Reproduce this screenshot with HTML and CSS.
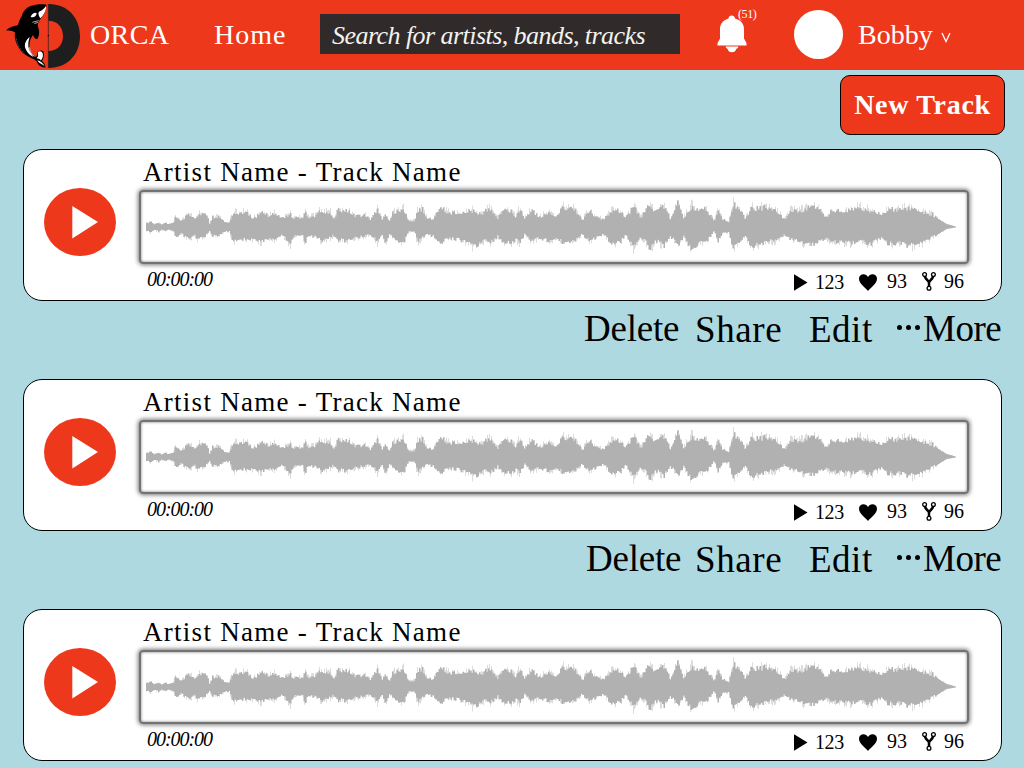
FILE: index.html
```html
<!DOCTYPE html>
<html lang="en">
<head>
<meta charset="utf-8">
<title>ORCA</title>
<link rel="stylesheet" href="styles.css">
</head>
<body>
<svg class="defs" aria-hidden="true">
  <symbol id="wave" viewBox="0 0 820 70" preserveAspectRatio="none">
    <path id="wave-soft" fill="#b1b1b1" opacity=".45"/>
    <path id="wave-core" fill="#b1b1b1"/>
  </symbol>
  <symbol id="play" viewBox="0 0 72 68">
    <ellipse cx="36" cy="34" rx="36" ry="34" fill="#ee381c"/>
    <path d="M28.3 18 54 34 28.3 50.5Z" fill="#fff"/>
  </symbol>
  <symbol id="tri" viewBox="0 0 14 17"><path d="M0 .3 13.5 8.5 0 16.7Z"/></symbol>
  <symbol id="heart" viewBox="0 0 18 17"><path d="M9 17C6 13.500 0 9.500 0 4.800 0 1.800 2 .2 4.500 .2 6.500 .2 8.200 1.300 9 3 9.800 1.300 11.500 .2 13.500 .2 16 .2 18 1.800 18 4.800 18 9.500 12 13.500 9 17Z"/></symbol>
  <symbol id="fork" viewBox="0 0 14 19">
    <g fill="none" stroke="#000">
      <circle cx="2.600" cy="2.600" r="1.900" stroke-width="1.300"/>
      <circle cx="11.400" cy="2.600" r="1.900" stroke-width="1.300"/>
      <circle cx="7" cy="16.300" r="1.900" stroke-width="1.300"/>
      <path d="M3 4.500C3.500 8 7 8 7 11V14.300M11 4.500C10.500 8 7 8 7 11" stroke-width="2.500"/>
    </g>
  </symbol>
</svg>

<header class="topbar">
  <svg class="logo" viewBox="15 6 228 204">
    <path d="M145 12C205 12 240 55 240 108S205 204 145 204V153C173 153 189 134 189 108S173 62 145 62Z" fill="#1e1e1e"/>
    <path d="M145 12V204" stroke="#1e1e1e" stroke-width="2"/>
    <circle cx="145" cy="107" r="2"/>
    <path d="M139 14C128 12 108 12 92 18 78 23 69 34 66 47 60 55 56 66 54 76 43 77 28 82 18 91 29 91 39 93 45 97 42 113 48 129 55 141 64 158 82 170 98 176 104 178 109 182 112 187 113 194 121 202 136 203 137 196 133 189 126 184 131 178 133 165 130 154 123 149 116 152 112 159 112 165 110 168 108 171 96 165 88 154 88 137 88 122 94 112 99 105 101 112 106 117 111 118 119 109 119 91 114 80 112 71 116 63 122 56 132 44 140 29 139 14Z"/>
    <path d="M138 17C129 24 123 32 117 35 112 43 119 49 121 55 132 44 140 29 138 17Z" fill="#fff"/>
    <path d="M139 14C130 14 123 23 117 34 128 31 136 23 139 14Z"/>
    <path d="M92 51C96 40 106 36 110 40 109 49 101 54 92 51Z" fill="#fff"/>
    <path d="M97 67 116 62M103 71 114 67" stroke="#fff" stroke-width="2"/>
    <path d="M89 111C77 121 72 133 76 145 80 157 89 166 101 171 92 159 84 147 85 132 85 124 88 117 89 111Z" fill="#fff"/>
    <path d="M89 142C88 153 94 163 103 169" fill="none" stroke="#fff" stroke-width="2"/>
    <path d="M114 157C119 151 125 153 128 160 130 170 127 179 122 181 120 175 112 177 110 174 117 169 113 164 114 157ZM112 181C121 183 131 190 135 201 128 191 118 193 112 181Z" fill="#fff"/>
    <path d="M49 116C51 132 60 147 73 159" fill="none" stroke="#ddd" stroke-width="1.500" stroke-dasharray="3 3"/>
  </svg>
  <span class="brand">ORCA</span>
  <a class="home">Home</a>
  <div class="search">Search for artists, bands, tracks</div>
  <div class="alerts">
    <svg class="bell" viewBox="0 0 30 38"><path d="M11.500 3.500C11.500-.5 18-.5 18 3.500 23.500 5 27 8.500 27 14V23.500L29.500 28V30.500H.5V28L3 23.500V14C3 8.500 6.500 5 11.500 3.500ZM8.500 31.500H21.500C21 33.500 19 33.500 18.800 35 18 38 12 38 11 35 11 33.500 9 33.500 8.500 31.500Z" fill="#fff"/></svg>
    <span class="count">(51)</span>
  </div>
  <div class="avatar"></div>
  <span class="user">Bobby</span>
  <svg class="caret" viewBox="0 0 10 11"><path d="M1 1 5 9.500 9 1" fill="none" stroke="#fff" stroke-width="1.300"/></svg>
</header>

<main class="feed">
  <div class="toolbar"><button class="new-track">New Track</button></div>

  <article class="track">
    <svg class="play"><use href="#play"/></svg>
    <div class="detail">
      <h2 class="title">Artist Name - Track Name</h2>
      <div class="frame"><svg class="wave"><use href="#wave"/></svg></div>
      <div class="meta">
        <span class="time">00:00:00</span>
        <svg class="tri"><use href="#tri"/></svg><span class="plays">123</span>
        <svg class="heart"><use href="#heart"/></svg><span class="likes">93</span>
        <svg class="fork"><use href="#fork"/></svg><span class="forks">96</span>
      </div>
    </div>
  </article>
  <nav class="actions">
    <a class="delete">Delete</a><a class="share">Share</a><a class="edit">Edit</a><a class="more"><i class="dots"><b></b><b></b><b></b></i>More</a>
  </nav>

  <article class="track">
    <svg class="play"><use href="#play"/></svg>
    <div class="detail">
      <h2 class="title">Artist Name - Track Name</h2>
      <div class="frame"><svg class="wave"><use href="#wave"/></svg></div>
      <div class="meta">
        <span class="time">00:00:00</span>
        <svg class="tri"><use href="#tri"/></svg><span class="plays">123</span>
        <svg class="heart"><use href="#heart"/></svg><span class="likes">93</span>
        <svg class="fork"><use href="#fork"/></svg><span class="forks">96</span>
      </div>
    </div>
  </article>
  <nav class="actions">
    <a class="delete tight">Delete</a><a class="share">Share</a><a class="edit">Edit</a><a class="more"><i class="dots"><b></b><b></b><b></b></i>More</a>
  </nav>

  <article class="track">
    <svg class="play"><use href="#play"/></svg>
    <div class="detail">
      <h2 class="title">Artist Name - Track Name</h2>
      <div class="frame"><svg class="wave"><use href="#wave"/></svg></div>
      <div class="meta">
        <span class="time">00:00:00</span>
        <svg class="tri"><use href="#tri"/></svg><span class="plays">123</span>
        <svg class="heart"><use href="#heart"/></svg><span class="likes">93</span>
        <svg class="fork"><use href="#fork"/></svg><span class="forks">96</span>
      </div>
    </div>
  </article>
</main>
<script src="wave.js"></script>
</body>
</html>
```
FILE: styles.css
```css
* { box-sizing: border-box; }
body {
  margin: 0;
  height: 768px;
  overflow: hidden;
  background: #aed9e1;
  color: #000;
  font-family: "Liberation Serif", "Times New Roman", serif;
}
svg { display: block; flex: none; }
.defs { position: absolute; width: 0; height: 0; }

.topbar {
  display: flex;
  align-items: center;
  height: 70px;
  padding-left: 5px;
  background: #ee381c;
  color: #fff;
  font-size: 28px;
  white-space: nowrap;
}
.logo { width: 76px; height: 68px; margin-top: 2px; }
.brand { width: 123px; padding-left: 9px; letter-spacing: .4px; }
.home { width: 116px; padding-left: 10px; letter-spacing: 1px; }
.search {
  width: 360px;
  height: 40px;
  margin-bottom: 2px;
  padding-left: 12px;
  background: #312a2a;
  color: #f3f3ee;
  font-size: 26px;
  font-style: italic;
  letter-spacing: -.55px;
  line-height: 43px;
}
.alerts { display: flex; align-items: flex-start; width: 114px; height: 54px; padding-left: 37px; }
.bell { width: 30px; height: 38px; margin-top: 7px; }
.count { margin-left: -9px; font-size: 12px; line-height: 13px; letter-spacing: -.4px; }
.avatar { width: 49px; height: 49px; margin-bottom: 1px; border-radius: 50%; background: #fff; }
.user { flex: none; width: 98px; padding-left: 15px; }
.caret { width: 10px; height: 11px; margin: 4px 0 0 0; }

.feed { padding: 5px 22px 0 23px; }
.toolbar { display: flex; justify-content: flex-end; height: 74px; margin-right: -3px; }
.new-track {
  width: 165px;
  height: 60px;
  padding: 0;
  border: 1px solid #000;
  border-radius: 10px;
  background: #ee381c;
  color: #fff;
  font: bold 28px/58px "Liberation Serif", serif;
  letter-spacing: .7px;
}

.track {
  display: flex;
  width: 979px;
  height: 152px;
  padding-left: 20px;
  border: 1px solid #000;
  border-radius: 19px;
  background: #fff;
}
.play { width: 72px; height: 68px; margin-top: 38px; }
.detail { width: 830px; margin-left: 23px; }
.title {
  height: 35px;
  margin: 5px 0 0;
  padding-left: 4px;
  font-size: 27px;
  font-weight: normal;
  line-height: 34px;
  letter-spacing: 1.28px;
}
.frame {
  height: 74px;
  padding-left: 5px;
  border: 2px solid #737373;
  border-radius: 4px;
  box-shadow: 0 0 4px 1px #777, inset 0 0 3px 0 #777;
}
.wave { width: 820px; height: 70px; }
.meta { display: flex; align-items: flex-start; height: 35px; padding: 6px 0 0 8px; font-size: 20px; line-height: 24px; letter-spacing: -.4px; }
.time { width: 647px; font-style: italic; letter-spacing: -1.05px; margin-top: -3px; }
.tri { width: 14px; height: 17px; margin-top: 4px; }
.plays { width: 50px; padding-left: 7px; }
.heart { width: 18px; height: 17px; margin: 4px 0 0 1px; }
.likes { width: 45px; padding-left: 10px; margin-top: -1px; letter-spacing: 0; }
.fork { width: 14px; height: 19px; margin-top: 2px; }
.forks { padding-left: 8px; margin-top: -1px; letter-spacing: 0; }

.actions { display: flex; height: 78px; padding: 1px 0 0 561px; font-size: 37px; line-height: 53px; white-space: nowrap; }
.delete { width: 111px; letter-spacing: -.2px; }
.tight { padding-left: 2px; }
.share { width: 114px; padding-top: 1px; letter-spacing: .6px; }
.edit { width: 88px; padding-top: 1px; letter-spacing: .5px; }
.more { display: flex; letter-spacing: -.5px; }
.dots { display: flex; gap: 4px; width: 26px; padding-top: 23px; }
.dots b { flex: none; width: 5px; height: 5px; border-radius: 50%; background: #000; }
```
FILE: wave.js
```javascript
// Amplitude samples: x, rise above the centre line, fall below it.
const samples = `146 4 4,150 6 6,154 3 3,158 5 5,161 3 3,165 5 5,168 3 3,173 5 5,175 12 12,180 7 7,184 10 10,189 14 13,194 9 10,198 15 14,207 12 8,209 4 5,212 11 10,220 11 9,224 5 5,229 5 5,231 14 13,235 17 16,240 14 14,245 19 13,251 10 13,256 12 14,261 19 17,267 12 12,275 15 15,282 9 9,290 15 20,292 9 10,302 11 10,305 18 19,307 11 9,315 12 11,320 18 15,330 16 12,333 8 9,337 18 14,348 18 15,355 12 12,365 13 10,370 8 8,377 19 17,382 8 8,385 13 20,389 7 7,392 16 13,403 20 17,408 7 5,414 7 5,417 18 17,422 20 12,427 9 8,432 9 10,436 16 14,441 20 16,450 15 12,460 15 14,472 18 21,480 14 19,484 17 15,490 21 17,497 10 10,503 19 18,510 17 18,515 12 13,519 20 18,524 10 8,530 18 15,540 11 12,548 17 16,555 13 12,564 22 18,574 19 16,582 8 8,588 18 15,595 12 12,603 8 8,611 18 18,620 18 16,625 10 9,633 23 23,640 11 10,645 17 16,649 26 27,655 16 14,663 22 21,670 9 10,677 26 20,683 10 10,691 23 26,700 17 15,705 20 18,711 11 8,714 7 4,717 20 16,722 9 7,728 6 6,733 25 24,740 18 16,745 9 8,750 21 22,757 20 20,767 22 15,775 20 16,784 8 8,790 18 14,800 18 16,808 21 20,818 22 16,825 10 12,830 17 16,840 17 16,850 20 18,860 21 16,870 18 19,880 15 12,887 18 18,898 20 18,914 21 21,926 15 16,932 14 11,938 8 7,946 3 2,955 .5 .5`
  .split(',').map(s => s.split(' ').map(Number));

let seed = 4211;
const rand = () => (seed = (seed * 16807) % 2147483647) / 2147483647;

function level(x, side) {
  let i = 1;
  while (i < samples.length - 1 && samples[i][0] < x) i++;
  const a = samples[i - 1], b = samples[i];
  const t = (x - a[0]) / (b[0] - a[0]);
  return a[side] + (b[side] - a[side]) * t;
}

function outline(low, high, step) {
  const top = [], bottom = [];
  for (let x = 146; x < 955; x += step) {
    const left = x - 146;
    const f = () => x > 936 ? 1 : low + (high - low) * Math.pow(rand(), 1.6);
    const up = (35 - level(x, 1) * f()).toFixed(1);
    const down = (35 + level(x, 2) * f()).toFixed(1);
    top.push(`${left} ${up}`, `${left + step} ${up}`);
    bottom.unshift(`${left + step} ${down}`, `${left} ${down}`);
  }
  return 'M' + top.concat(bottom).join('L') + 'Z';
}

document.getElementById('wave-soft').setAttribute('d', outline(.75, 1.2, 1));
document.getElementById('wave-core').setAttribute('d', outline(.78, 1.06, 1.5));
```
